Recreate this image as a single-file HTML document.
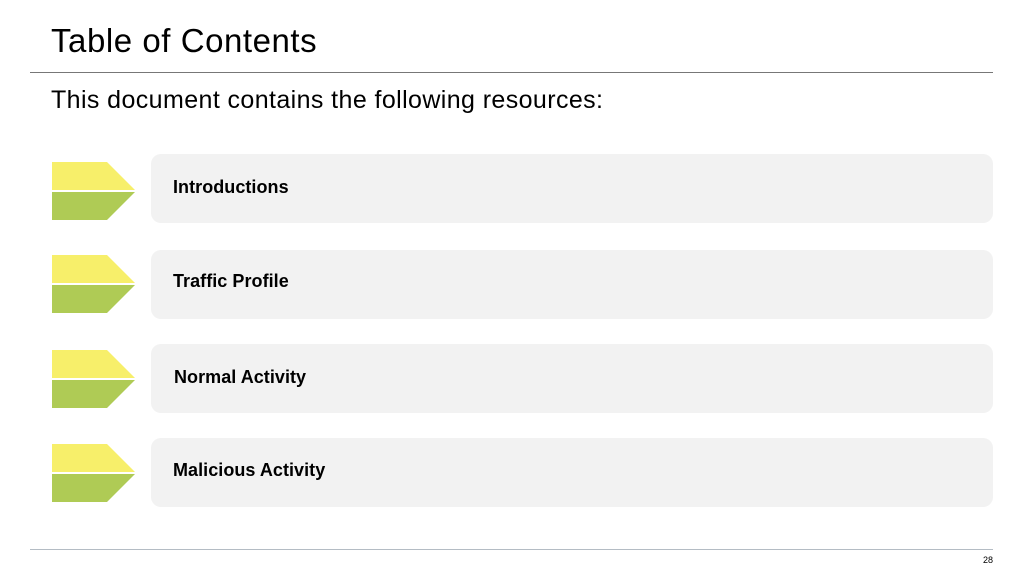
<html><head><style>
body{margin:0;width:1024px;height:576px;background:#fff;position:relative;font-family:"Liberation Sans",sans-serif;overflow:hidden}
.t{position:absolute;left:51px;top:22px;font-size:33px;letter-spacing:0.55px;color:#000}
.s{position:absolute;left:51px;top:86px;font-size:25px;letter-spacing:0.4px;color:#000}
.l{position:absolute;left:30px;width:963px;height:1px;background:#777}
.b{position:absolute;left:151px;width:842px;height:69px;background:#f2f2f2;border-radius:10px}
.b span{position:absolute;left:22px;top:23px;font-size:18px;font-weight:bold;letter-spacing:0.05px}
svg{position:absolute;left:52px}
</style></head><body>
<div class="t">Table of Contents</div>
<div class="l" style="top:72px"></div>
<div class="s">This document contains the following resources:</div>
<div class="l" style="top:549px;background:#b4bcc4"></div>
<div style="position:absolute;left:983px;top:555px;font-size:9px">28</div>
<div class="b" style="top:154px"><span>Introductions</span></div>
<div class="b" style="top:250px"><span style="top:21px">Traffic Profile</span></div>
<div class="b" style="top:344px"><span style="left:23px">Normal Activity</span></div>
<div class="b" style="top:438px"><span style="top:22px">Malicious Activity</span></div>
<svg style="top:162px" width="84" height="60"><polygon points="0,0 55,0 83,28 0,28" fill="#f7ef6a"/><polygon points="0,30 83,30 55,58 0,58" fill="#afcb55"/></svg>
<svg style="top:255px" width="84" height="60"><polygon points="0,0 55,0 83,28 0,28" fill="#f7ef6a"/><polygon points="0,30 83,30 55,58 0,58" fill="#afcb55"/></svg>
<svg style="top:350px" width="84" height="60"><polygon points="0,0 55,0 83,28 0,28" fill="#f7ef6a"/><polygon points="0,30 83,30 55,58 0,58" fill="#afcb55"/></svg>
<svg style="top:444px" width="84" height="60"><polygon points="0,0 55,0 83,28 0,28" fill="#f7ef6a"/><polygon points="0,30 83,30 55,58 0,58" fill="#afcb55"/></svg>
</body></html>
